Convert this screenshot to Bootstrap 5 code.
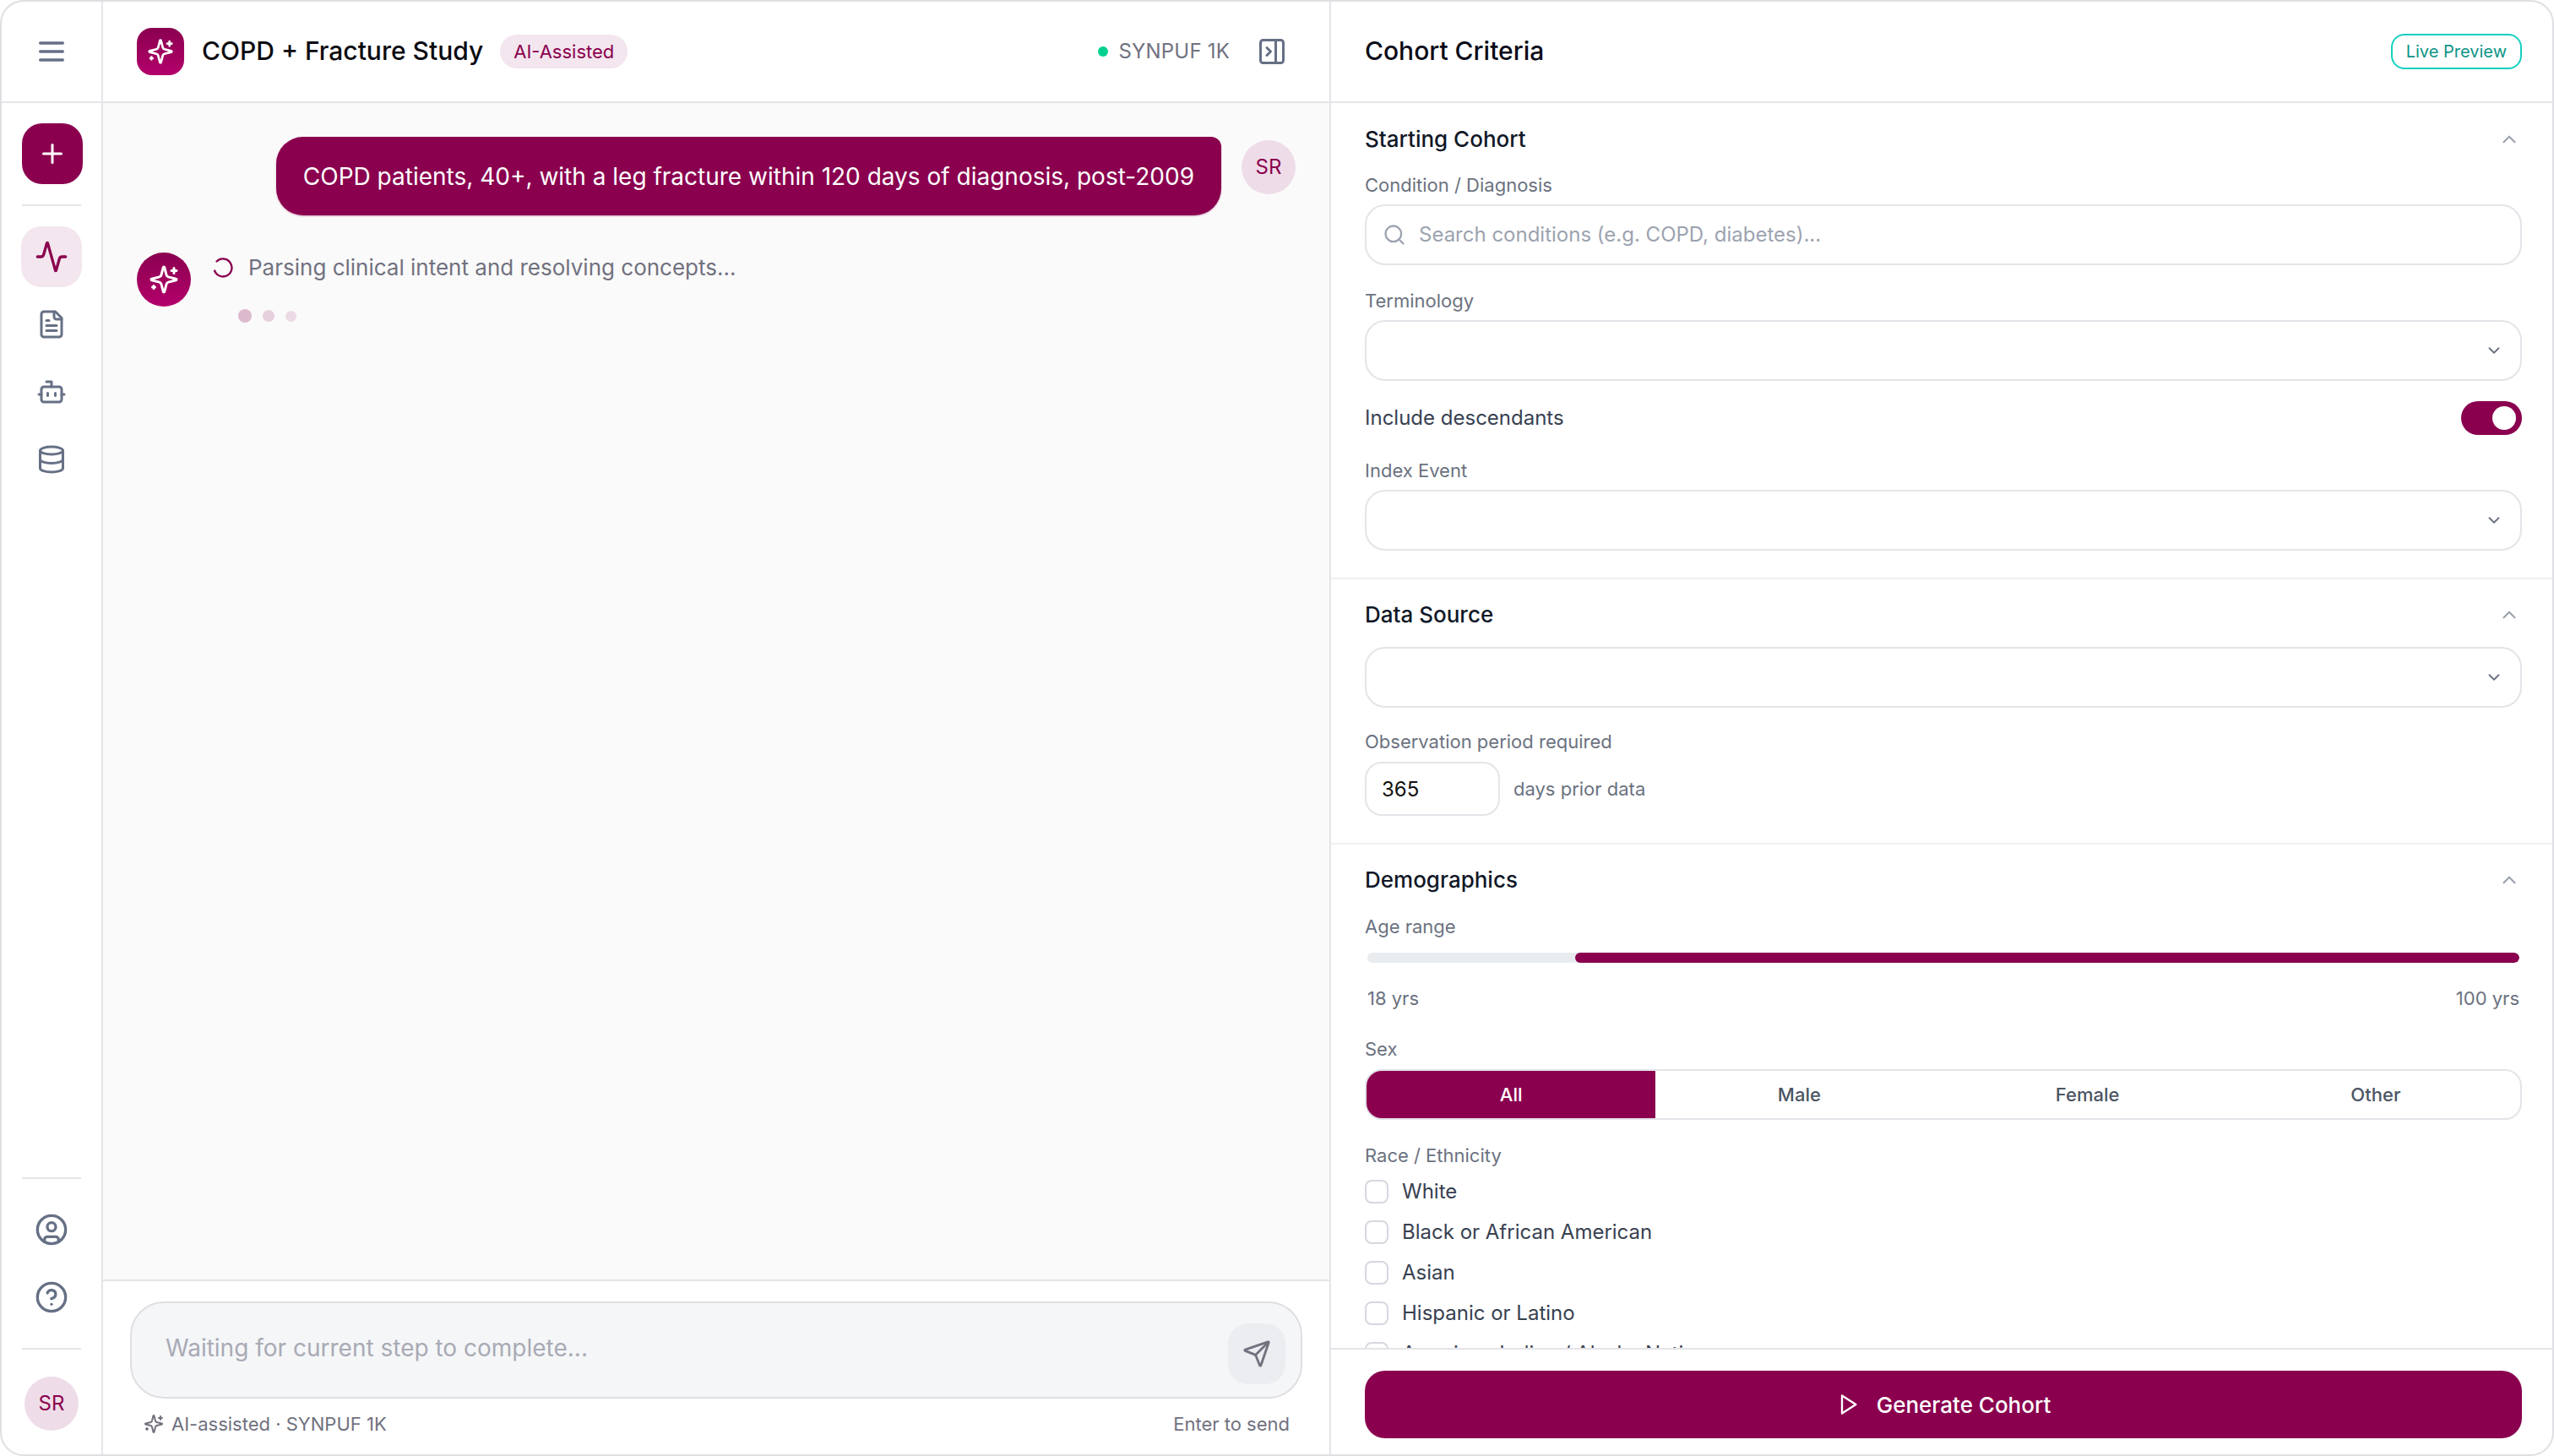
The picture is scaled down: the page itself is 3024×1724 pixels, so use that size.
<!DOCTYPE html>
<html lang="en">
<head>
  <meta charset="UTF-8" />
  <meta name="viewport" content="width=device-width, initial-scale=1.0" />
  <title>COPD + Fracture Study</title>
  <link rel="stylesheet" href="https://cdn.jsdelivr.net/npm/bootstrap@5.3.3/dist/css/bootstrap.min.css">
  <style>
    :root { --plum: #8a004f; --plum-soft: #f3e6ee; --line: #e4e4e9; --muted: #6b7280; --grey: #71717f; --icon: #667085; }
    body { margin: 0; background: #fff; font-family: Inter, "Liberation Sans", sans-serif; font-size: 24px; color: #111827; }
    svg.ico { fill: none; stroke: currentColor; stroke-width: 2; stroke-linecap: round; stroke-linejoin: round; flex: none; }

    .app-frame { height: 100vh; border: 2px solid #dfdfe3; border-radius: 28px; overflow: hidden; }
    .top-cell { height: 120px; flex: none; border-bottom: 2px solid var(--line); }

    .side-rail { width: 120px; flex: none; border-right: 2px solid var(--line); }
    .rail-top { color: var(--icon); }
    .rail-body { padding: 24px 0 28px; color: var(--icon); }
    .rail-btn { width: 72px; height: 72px; border-radius: 24px; border: 0; background: none; color: var(--icon); padding: 0; }
    .rail-btn.is-new { background: var(--plum); color: #fff; margin-left: 2px; }
    .rail-btn.is-active { background: var(--plum-soft); color: var(--plum); }
    .rail-line { width: 70px; height: 2px; background: var(--line); flex: none; }
    .initials { width: 64px; height: 64px; border-radius: 50%; background: #eeddE8; color: var(--plum); font-size: 24px; flex: none; }

    .main-col { width: 1454px; flex: none; border-right: 2px solid var(--line); }
    .logo-tile { width: 56px; height: 56px; border-radius: 18px; background: linear-gradient(180deg, #8a004f, #b3006b); color: #fff; }
    .study-title { font-size: 30px; font-weight: 500; color: #0b0b10; margin: 0 0 2px; line-height: 40px; }
    .assist-pill { height: 40px; padding: 0 16px; border-radius: 20px; background: var(--plum-soft); color: var(--plum); font-size: 22px; }
    .source-name { font-size: 24px; color: var(--grey); letter-spacing: .2px; }
    .live-dot { width: 12px; height: 12px; border-radius: 50%; background: #00d18f; }

    .chat-area { background: #fafafa; padding: 40px; min-height: 0; }
    .user-bubble { background: var(--plum); color: #fff; font-size: 28px; line-height: 45px; padding: 25px 32px 23px; border-radius: 32px 12px 32px 32px; box-shadow: 0 1px 2px rgba(138,0,79,.35); }
    .ai-row { margin-top: 44px; }
    .ai-face { width: 64px; height: 64px; border-radius: 50%; background: linear-gradient(180deg, #8a004f, #b3006b); color: #fff; }
    .ai-status { font-size: 26px; line-height: 34px; color: var(--grey); }
    .wait-dots { margin: 32px 0 0 32px; }
    .wait-dots span { border-radius: 50%; background: var(--plum); }

    .composer { border-top: 2px solid var(--line); padding: 24px 32px 0; background: #fff; flex: none; height: 207px; }
    .composer-box { height: 115px; border: 2px solid #dfdfe3; border-radius: 40px; background: #f5f6f8; padding: 0 18px 15px 40px; }
    .composer-box .form-control { background: none; border: 0; padding: 10px 0 0; height: 82px; font-size: 28px; box-shadow: none; }
    .composer-box .form-control::placeholder { color: #a9aab5; opacity: 1; }
    .send-btn { width: 72px; height: 72px; border-radius: 24px; border: 0; background: #ecedf1; color: var(--grey); padding: 0; }
    .composer-note { font-size: 22px; line-height: 32px; color: var(--grey); padding: 14px 15px 0 16px; }

    .criteria-col { min-width: 0; }
    .criteria-head { padding: 0 36px 0 40px; }
    .criteria-title { font-size: 30px; font-weight: 500; margin: 0 0 2px; color: #0b0b18; }
    .live-tag { height: 42px; padding: 0 16px; border: 2px solid #14d0bf; border-radius: 16px; color: #0d9488; font-size: 20px; }
    .criteria-scroll { min-height: 0; overflow: hidden; }
    .crit-block { padding: 23px 36px 32px 40px; border-bottom: 2px solid #f0f0f3; }
    .crit-block:first-child { padding-top: 24px; }
    .crit-head { height: 38px; color: #111827; }
    .crit-head h2 { font-size: 26px; font-weight: 500; line-height: 38px; margin: 0; }
    .crit-head svg { color: #9ca3af; margin-right: 2px; }
    .field-label { display: block; font-size: 22px; line-height: 32px; color: var(--muted); margin: 0 0 7px; }
    .crit-input { height: 72px; border: 2px solid var(--line); border-radius: 24px; font-size: 24px; box-shadow: none; }
    .search-wrap { height: 72px; border: 2px solid var(--line); border-radius: 24px; padding: 0 19px; color: #9ca3af; }
    .search-wrap .form-control { border: 0; padding: 0; font-size: 24px; box-shadow: none; }
    .search-wrap .form-control::placeholder { color: #9ca3af; opacity: 1; }
    .form-select.crit-input { padding: 0 60px 0 20px; background-position: right 20px center; background-size: 22px 22px; background-image: url("data:image/svg+xml,%3csvg xmlns='http://www.w3.org/2000/svg' viewBox='0 0 24 24' fill='none' stroke='%236b7280' stroke-width='2' stroke-linecap='round' stroke-linejoin='round'%3e%3cpath d='m6 9 6 6 6-6'/%3e%3c/svg%3e"); }
    .switch-row { height: 40px; margin: 24px 0 26px; font-size: 24px; color: #374151; }
    .switch-row.form-switch .form-check-input { width: 72px; height: 40px; margin: 0; float: none; border: 0; border-radius: 20px; box-shadow: none; background-color: var(--plum); background-size: 28px 28px; background-position: right 7px center; background-image: url("data:image/svg+xml,%3csvg xmlns='http://www.w3.org/2000/svg' viewBox='-4 -4 8 8'%3e%3ccircle r='4' fill='%23fff'/%3e%3c/svg%3e"); }
    .days-input { width: 160px; height: 64px; border: 2px solid var(--line); border-radius: 20px; padding: 0 18px; font-size: 24px; color: #111; box-shadow: none; }
    .days-note { font-size: 22px; color: var(--muted); }
    .age-track { height: 12px; margin: 15px 3px 26px; border-radius: 6px; }
    .age-track .progress-bar { background: var(--plum); border-radius: 6px; }
    .age-ends { font-size: 22px; line-height: 32px; color: var(--muted); padding: 0 3px; margin-bottom: 28px; }
    .sex-toggle { height: 60px; border: 2px solid var(--line); border-radius: 20px; overflow: hidden; margin-bottom: 26px; }
    .sex-toggle .btn { flex: 1 1 0; border: 0; border-radius: 0; font-size: 22px; font-weight: 500; color: #4b5563; padding: 0; }
    .sex-toggle .btn.active { background: var(--plum); color: #fff; }
    .race-list { gap: 16px; margin-top: 11px; }
    .race-item { min-height: 0; height: 32px; padding: 0; margin: 0; gap: 16px; font-size: 24px; color: #374151; }
    .race-item .form-check-input { float: none; margin: 0; width: 28px; height: 28px; border: 2px solid #d5d8df; border-radius: 8px; box-shadow: none; }
    .race-item .form-check-label { line-height: 32px; white-space: nowrap; }
    .criteria-foot { flex: none; height: 126px; border-top: 2px solid var(--line); padding: 25px 36px 0 40px; }
    .generate-btn { height: 80px; background: var(--plum); color: #fff; border: 0; border-radius: 24px; font-size: 26px; font-weight: 500; gap: 20px; }
    .generate-btn:hover { background: var(--plum); color: #fff; }
  </style>
</head>
<body>

  <svg width="0" height="0" class="position-absolute">
    <defs>
      <symbol id="i-menu" viewBox="0 0 24 24"><path d="M4 12h16M4 6h16M4 18h16"/></symbol>
      <symbol id="i-plus" viewBox="0 0 24 24"><path d="M5 12h14M12 5v14"/></symbol>
      <symbol id="i-activity" viewBox="0 0 24 24"><path d="M22 12h-2.48a2 2 0 0 0-1.93 1.46l-2.35 8.36a.25.25 0 0 1-.48 0L9.24 2.18a.25.25 0 0 0-.48 0l-2.35 8.36A2 2 0 0 1 4.49 12H2"/></symbol>
      <symbol id="i-file" viewBox="0 0 24 24"><path d="M15 2H6a2 2 0 0 0-2 2v16a2 2 0 0 0 2 2h12a2 2 0 0 0 2-2V7Z"/><path d="M14 2v4a2 2 0 0 0 2 2h4"/><path d="M10 9H8M16 13H8M16 17H8"/></symbol>
      <symbol id="i-bot" viewBox="0 0 24 24"><path d="M12 8V4H8"/><rect width="16" height="12" x="4" y="8" rx="2"/><path d="M2 14h2M20 14h2M15 13v2M9 13v2"/></symbol>
      <symbol id="i-db" viewBox="0 0 24 24"><ellipse cx="12" cy="5" rx="9" ry="3"/><path d="M3 5V19A9 3 0 0 0 21 19V5"/><path d="M3 12A9 3 0 0 0 21 12"/></symbol>
      <symbol id="i-user" viewBox="0 0 24 24"><circle cx="12" cy="12" r="10"/><circle cx="12" cy="10" r="3"/><path d="M7 20.662V19a2 2 0 0 1 2-2h6a2 2 0 0 1 2 2v1.662"/></symbol>
      <symbol id="i-help" viewBox="0 0 24 24"><circle cx="12" cy="12" r="10"/><path d="M9.09 9a3 3 0 0 1 5.83 1c0 2-3 3-3 3"/><path d="M12 17h.01"/></symbol>
      <symbol id="i-spark" viewBox="0 0 24 24"><path d="M9.937 15.5A2 2 0 0 0 8.5 14.063l-6.135-1.582a.5.5 0 0 1 0-.962L8.5 9.936A2 2 0 0 0 9.937 8.5l1.582-6.135a.5.5 0 0 1 .963 0L14.063 8.5A2 2 0 0 0 15.5 9.937l6.135 1.581a.5.5 0 0 1 0 .964L15.5 14.063a2 2 0 0 0-1.437 1.437l-1.582 6.135a.5.5 0 0 1-.963 0z"/><path d="M20 3v4M22 5h-4M4 17v2M5 18H3"/></symbol>
      <symbol id="i-panel" viewBox="0 0 24 24"><rect width="18" height="18" x="3" y="3" rx="2"/><path d="M15 3v18"/><path d="m8 9 3 3-3 3"/></symbol>
      <symbol id="i-send" viewBox="0 0 24 24"><path d="M14.536 21.686a.5.5 0 0 0 .937-.024l6.5-19a.496.496 0 0 0-.635-.635l-19 6.5a.5.5 0 0 0-.024.937l7.93 3.18a2 2 0 0 1 1.112 1.11z"/><path d="m21.854 2.147-10.94 10.939"/></symbol>
      <symbol id="i-search" viewBox="0 0 24 24"><path d="m21 21-4.3-4.3"/><circle cx="11" cy="11" r="8"/></symbol>
      <symbol id="i-up" viewBox="0 0 24 24"><path d="m18 15-6-6-6 6"/></symbol>
      <symbol id="i-play" viewBox="0 0 24 24"><polygon points="6 3 20 12 6 21 6 3"/></symbol>
      <symbol id="i-spin" viewBox="0 0 24 24"><path d="M5.6 5.6A9 9 0 1 1 3.5 15"/></symbol>
    </defs>
  </svg>

  <div class="app-frame d-flex">

    <!-- left rail -->
    <aside class="side-rail d-flex flex-column">
      <div class="top-cell rail-top d-flex align-items-center justify-content-center">
        <svg class="ico" width="40" height="40"><use href="#i-menu"/></svg>
      </div>
      <div class="rail-body flex-grow-1 d-flex flex-column align-items-center">
        <button class="rail-btn is-new d-flex align-items-center justify-content-center"><svg class="ico" width="36" height="36"><use href="#i-plus"/></svg></button>
        <div class="rail-line my-4"></div>
        <div class="d-flex flex-column gap-2">
          <button class="rail-btn is-active d-flex align-items-center justify-content-center"><svg class="ico" width="40" height="40"><use href="#i-activity"/></svg></button>
          <button class="rail-btn d-flex align-items-center justify-content-center"><svg class="ico" width="36" height="36"><use href="#i-file"/></svg></button>
          <button class="rail-btn d-flex align-items-center justify-content-center"><svg class="ico" width="36" height="36"><use href="#i-bot"/></svg></button>
          <button class="rail-btn d-flex align-items-center justify-content-center"><svg class="ico" width="36" height="36"><use href="#i-db"/></svg></button>
        </div>
        <div class="mt-auto rail-line mb-4"></div>
        <div class="d-flex flex-column gap-2">
          <button class="rail-btn d-flex align-items-center justify-content-center"><svg class="ico" width="40" height="40"><use href="#i-user"/></svg></button>
          <button class="rail-btn d-flex align-items-center justify-content-center"><svg class="ico" width="40" height="40"><use href="#i-help"/></svg></button>
        </div>
        <div class="rail-line mt-4"></div>
        <div class="initials d-flex align-items-center justify-content-center" style="margin-top:32px">SR</div>
      </div>
    </aside>

    <!-- chat column -->
    <main class="main-col d-flex flex-column">
      <header class="top-cell d-flex align-items-center" style="padding:0 50px 0 40px">
        <div class="logo-tile d-flex align-items-center justify-content-center"><svg class="ico" width="32" height="32"><use href="#i-spark"/></svg></div>
        <h1 class="study-title" style="margin-left:21px">COPD + Fracture Study</h1>
        <span class="assist-pill d-inline-flex align-items-center" style="margin-left:20px">AI-Assisted</span>
        <div class="ms-auto d-flex align-items-center" style="gap:12px">
          <span class="live-dot"></span>
          <span class="source-name">SYNPUF 1K</span>
        </div>
        <svg class="ico" width="36" height="36" style="margin-left:32px;color:var(--icon)"><use href="#i-panel"/></svg>
      </header>

      <section class="chat-area flex-grow-1">
        <div class="d-flex justify-content-end" style="gap:24px">
          <div class="user-bubble">COPD patients, 40+, with a leg fracture within 120 days of diagnosis, post-2009</div>
          <div class="initials d-flex align-items-center justify-content-center" style="margin-top:4px">SR</div>
        </div>
        <div class="ai-row d-flex">
          <div class="ai-face d-flex align-items-center justify-content-center flex-none"><svg class="ico" width="36" height="36"><use href="#i-spark"/></svg></div>
          <div style="margin-left:24px">
            <div class="ai-status d-flex align-items-center" style="gap:16px;margin-top:1px">
              <svg class="ico" width="28" height="28" style="color:var(--plum)"><use href="#i-spin"/></svg>
              <span>Parsing clinical intent and resolving concepts...</span>
            </div>
            <div class="wait-dots d-flex align-items-center" style="gap:13px">
              <span style="width:16px;height:16px;opacity:.26"></span>
              <span style="width:14px;height:14px;opacity:.17"></span>
              <span style="width:13px;height:13px;opacity:.12"></span>
            </div>
          </div>
        </div>
      </section>

      <footer class="composer">
        <div class="composer-box d-flex align-items-end justify-content-between">
          <input class="form-control align-self-center" type="text" placeholder="Waiting for current step to complete..." disabled>
          <button class="send-btn d-flex align-items-center justify-content-center flex-none"><svg class="ico" width="34" height="34"><use href="#i-send"/></svg></button>
        </div>
        <div class="composer-note d-flex justify-content-between">
          <span class="d-flex align-items-center" style="gap:9px"><svg class="ico" width="24" height="24"><use href="#i-spark"/></svg>AI-assisted · SYNPUF 1K</span>
          <span>Enter to send</span>
        </div>
      </footer>
    </main>

    <!-- criteria column -->
    <div class="criteria-col flex-grow-1 d-flex flex-column">
      <div class="top-cell criteria-head d-flex align-items-center justify-content-between">
        <h2 class="criteria-title">Cohort Criteria</h2>
        <span class="live-tag d-inline-flex align-items-center">Live Preview</span>
      </div>

      <div class="criteria-scroll flex-grow-1">
        <section class="crit-block">
          <div class="crit-head d-flex align-items-center justify-content-between" style="margin-bottom:19px">
            <h2>Starting Cohort</h2><svg class="ico" width="26" height="26"><use href="#i-up"/></svg>
          </div>
          <label class="field-label">Condition / Diagnosis</label>
          <div class="search-wrap d-flex align-items-center" style="gap:15px">
            <svg class="ico" width="28" height="28"><use href="#i-search"/></svg>
            <input class="form-control" type="text" placeholder="Search conditions (e.g. COPD, diabetes)...">
          </div>
          <label class="field-label" style="margin-top:26px">Terminology</label>
          <select class="form-select crit-input"><option></option></select>
          <div class="switch-row form-check form-switch d-flex align-items-center justify-content-between p-0">
            <label class="form-check-label" for="descendants">Include descendants</label>
            <input class="form-check-input" type="checkbox" id="descendants" checked>
          </div>
          <label class="field-label">Index Event</label>
          <select class="form-select crit-input"><option></option></select>
        </section>

        <section class="crit-block">
          <div class="crit-head d-flex align-items-center justify-content-between" style="margin-bottom:19px">
            <h2>Data Source</h2><svg class="ico" width="26" height="26"><use href="#i-up"/></svg>
          </div>
          <select class="form-select crit-input"><option></option></select>
          <label class="field-label" style="margin:24px 0 8px">Observation period required</label>
          <div class="d-flex align-items-center" style="gap:16px">
            <input class="form-control days-input" type="text" value="365">
            <span class="days-note">days prior data</span>
          </div>
        </section>

        <section class="crit-block">
          <div class="crit-head d-flex align-items-center justify-content-between" style="margin-bottom:20px">
            <h2>Demographics</h2><svg class="ico" width="26" height="26"><use href="#i-up"/></svg>
          </div>
          <label class="field-label mb-0">Age range</label>
          <div class="age-track progress">
            <div class="progress-bar" style="margin-left:18%;width:82%"></div>
          </div>
          <div class="age-ends d-flex justify-content-between"><span>18 yrs</span><span>100 yrs</span></div>
          <label class="field-label" style="margin-bottom:8px">Sex</label>
          <div class="sex-toggle btn-group d-flex" role="group">
            <button type="button" class="btn active">All</button>
            <button type="button" class="btn">Male</button>
            <button type="button" class="btn">Female</button>
            <button type="button" class="btn">Other</button>
          </div>
          <label class="field-label mb-0">Race / Ethnicity</label>
          <div class="race-list d-flex flex-column">
            <div class="race-item form-check d-flex align-items-center"><input class="form-check-input" type="checkbox" id="r1"><label class="form-check-label" for="r1">White</label></div>
            <div class="race-item form-check d-flex align-items-center"><input class="form-check-input" type="checkbox" id="r2"><label class="form-check-label" for="r2">Black or African American</label></div>
            <div class="race-item form-check d-flex align-items-center"><input class="form-check-input" type="checkbox" id="r3"><label class="form-check-label" for="r3">Asian</label></div>
            <div class="race-item form-check d-flex align-items-center"><input class="form-check-input" type="checkbox" id="r4"><label class="form-check-label" for="r4">Hispanic or Latino</label></div>
            <div class="race-item form-check d-flex align-items-center"><input class="form-check-input" type="checkbox" id="r5"><label class="form-check-label" for="r5">American Indian / Alaska Native</label></div>
          </div>
        </section>
      </div>

      <div class="criteria-foot">
        <button class="btn generate-btn w-100 d-flex align-items-center justify-content-center">
          <svg class="ico" width="28" height="28"><use href="#i-play"/></svg>Generate Cohort
        </button>
      </div>
    </div>
  </div>

  <script src="https://cdn.jsdelivr.net/npm/bootstrap@5.3.3/dist/js/bootstrap.bundle.min.js"></script>
</body>
</html>
